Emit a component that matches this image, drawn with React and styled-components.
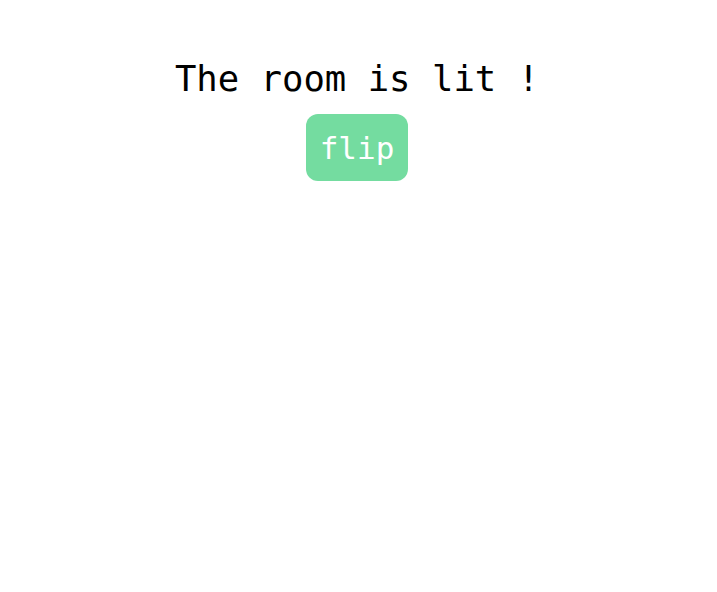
import React, { useState } from "react";
import styled, { createGlobalStyle } from "styled-components";

const GlobalStyle = createGlobalStyle`
  body {
    margin: 0;
    background: #ffffff;
    font-family: "DejaVu Sans Mono", monospace;
  }
`;

const Room = styled.div`
  display: flex;
  flex-direction: column;
  align-items: center;
  padding: 54px 3px 0 0;
`;

const Title = styled.h1`
  margin: 0 0 11px;
  font-size: 35.6px;
  font-weight: normal;
  color: #000;
  line-height: 49px;
`;

const Flip = styled.button`
  background: #74dca0;
  color: #fff;
  border: none;
  border-radius: 12px;
  width: 102px;
  height: 67px;
  padding: 0;
  font-family: "DejaVu Sans Mono", monospace;
  font-size: 31px;
  cursor: pointer;
`;

const App = () => {
  const [lit, setLit] = useState(true);
  return (
    <Room>
      <GlobalStyle />
      <Title>The room is {lit ? "lit" : "dark"} !</Title>
      <Flip onClick={() => setLit(!lit)}>flip</Flip>
    </Room>
  );
};

export default App;
